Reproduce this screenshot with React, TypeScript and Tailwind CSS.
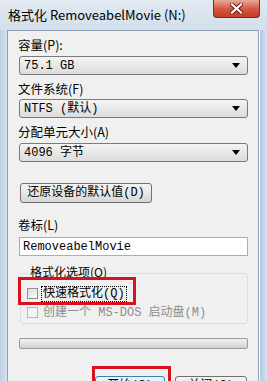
import React from 'react';

const cjk = '"Microsoft YaHei", "Noto Sans CJK SC", sans-serif';
const mono = '"Liberation Mono", "Noto Sans CJK SC", monospace';

function Combo({ value }: { value: string }) {
	return (
		<div className="shrink-0 flex items-center justify-between h-[19px] w-[229px] rounded-[3px] border border-[#7a7a7a] bg-gradient-to-b from-[#f4f4f4] to-[#dcdcdc] pl-[4px] pr-[7px]">
			<span className="text-[12px] leading-none text-black" style={{ fontFamily: mono }}>{value}</span>
			<svg width="8" height="5" viewBox="0 0 8 5"><path d="M0 0 L8 0 L4 5 Z" fill="#000" /></svg>
		</div>
	);
}

function Label({ text }: { text: string }) {
	return (
		<div className="shrink-0 h-[14px] flex items-center text-[12.5px] leading-none text-black" style={{ fontFamily: cjk }}>{text}</div>
	);
}

function Check({ label, disabled, focus }: { label: string; disabled?: boolean; focus?: boolean }) {
	return (
		<div className="flex items-center h-[19px] pl-[6px]">
			<div className={`w-[11px] h-[11px] border ${disabled ? 'border-[#b8b8b8] bg-[#f4f4f4]' : 'border-[#8e8f8f] bg-gradient-to-br from-[#dcdcdc] to-[#fbfbfb]'}`} />
			<span
				className={`ml-[4px] text-[12px] leading-none px-[1px] py-[1px] ${disabled ? 'text-[#8d8d8d]' : 'text-black'} ${focus ? 'outline outline-1 outline-dotted outline-black' : ''}`}
				style={{ fontFamily: mono }}
			>
				{label}
			</span>
		</div>
	);
}

export default function App() {
	return (
		<div className="relative w-[267px] h-[381px] overflow-hidden bg-[#cfdcea] flex flex-col">
			{/* title bar */}
			<div className="shrink-0 h-[30px] flex items-start justify-between bg-gradient-to-b from-[#e2e9f1] to-[#d3dfeb]">
				<div className="pl-[8px] pt-[8px] text-[13px] leading-none text-black" style={{ fontFamily: cjk }}>
					格式化 RemoveabelMovie (N:)
				</div>
				<div className="mr-[7px] w-[47px] h-[18px] rounded-b-[4px] border border-t-0 border-[#7a2b22] bg-gradient-to-b from-[#e9a899] via-[#d55a44] to-[#c33b24] flex items-center justify-center">
					<svg width="13" height="11" viewBox="0 0 13 11">
						<path d="M2 1.5 L11 9.5 M11 1.5 L2 9.5" stroke="#5a1a12" strokeWidth="4" strokeLinecap="square" />
						<path d="M2 1.5 L11 9.5 M11 1.5 L2 9.5" stroke="#ffffff" strokeWidth="2.2" strokeLinecap="square" />
					</svg>
				</div>
			</div>

			<div className="flex flex-1 min-h-0">
				<div className="w-[7px] bg-gradient-to-r from-[#bfcfe0] to-[#d6e2ee]" />
				{/* client panel */}
				<div className="w-[252px] overflow-hidden border border-b-0 border-[#8da0b4] bg-[#f0f0f0] pl-[11px] flex flex-col">
					<div className="shrink-0 mt-[7px] -ml-[1px]"><Label text="容量(P):" /></div>
					<div className="shrink-0 mt-[4px]"><Combo value="75.1 GB" /></div>
					<div className="shrink-0 mt-[7px] -ml-[1px]"><Label text="文件系统(F)" /></div>
					<div className="shrink-0 mt-[3px]"><Combo value="NTFS (默认)" /></div>
					<div className="shrink-0 mt-[7px] -ml-[1px]"><Label text="分配单元大小(A)" /></div>
					<div className="shrink-0 mt-[4px]"><Combo value="4096 字节" /></div>

					<div className="shrink-0 mt-[21px] ml-[1px] w-[132px] h-[20px] rounded-[3px] border border-[#707070] bg-gradient-to-b from-[#f3f3f3] via-[#e8e8e8] to-[#d5d5d5] flex items-center justify-center text-[12px] leading-none text-black" style={{ fontFamily: mono }}>
						还原设备的默认值(D)
					</div>

					<div className="shrink-0 mt-[15px] -ml-[1px]"><Label text="卷标(L)" /></div>
					<div className="shrink-0 mt-[5px] w-[229px] h-[19px] border border-[#abadb3] bg-white flex items-center pl-[3px] text-[12px] leading-none text-black" style={{ fontFamily: mono }}>
						RemoveabelMovie
					</div>

					{/* group box */}
					<div className="shrink-0 relative mt-[17px] ml-[1px] w-[228px] h-[51px] rounded-[3px] border border-[#d5dfe5] pt-[10px]">
						<div className="absolute -top-[8px] left-[7px] px-[2px] bg-[#f0f0f0] text-[12px] leading-none text-black" style={{ fontFamily: cjk }}>
							格式化选项(O)
						</div>
						<Check label="快速格式化(Q)" focus />
						<Check label="创建一个 MS-DOS 启动盘(M)" disabled />
					</div>

					{/* progress */}
					<div className="shrink-0 mt-[14px] w-[229px] h-[11px] rounded-[2px] border border-[#9a9a9a] bg-gradient-to-b from-[#f3f3f3] via-[#e2e2e2] to-[#d0d0d0]" />

					{/* buttons */}
					<div className="shrink-0 mt-[27px] flex justify-end gap-[10px] pr-[11px]">
						<div className="w-[70px] h-[22px] rounded-[3px] border border-[#3c7fb1] bg-gradient-to-b from-[#eaf6fd] to-[#bee6fd] flex justify-center pt-[3px] text-[12px] leading-none text-black" style={{ fontFamily: mono }}>
							开始(S)
						</div>
						<div className="w-[72px] h-[22px] rounded-[3px] border border-[#707070] bg-gradient-to-b from-[#f3f3f3] to-[#dddddd] flex justify-center pt-[3px] text-[12px] leading-none text-black" style={{ fontFamily: mono }}>
							关闭(C)
						</div>
					</div>
				</div>
				<div className="flex-1 flex">
					<div className="w-[1px] bg-white" />
					<div className="flex-1 bg-gradient-to-r from-[#b3c8df] to-[#d7e3ef]" />
				</div>
			</div>

			{/* red annotation boxes */}
			<div className="absolute left-[18px] top-[277px] w-[118px] h-[28px] border-[3px] border-[#d8121c]" />
			<div className="absolute left-[92px] top-[366px] w-[79px] h-[30px] border-[3px] border-[#d8121c]" />
		</div>
	);
}
